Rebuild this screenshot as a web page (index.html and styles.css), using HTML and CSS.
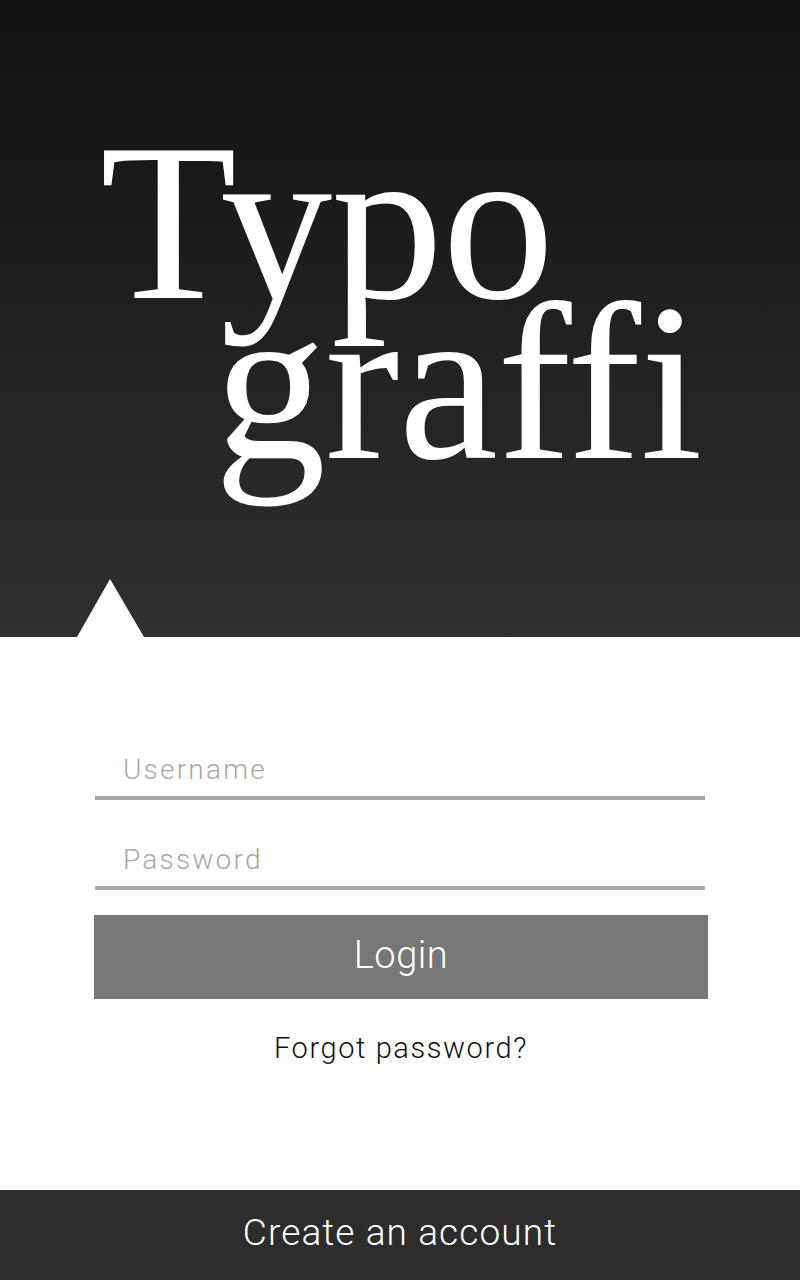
FILE: index.html
```html
<!DOCTYPE html>
<html lang="en">
<head>
<meta charset="utf-8">
<title>Typograffi — Login</title>
<link rel="stylesheet" href="styles.css">
</head>
<body>
<div class="app">
  <header class="hero">
    <h1 class="logo">
      <span class="logo-line first">Typo</span>
      <span class="logo-line second">graffi</span>
    </h1>
  </header>
  <main class="panel">
    <form class="login-form">
      <input class="field" type="text" placeholder="Username">
      <input class="field" type="password" placeholder="Password">
      <button class="btn-login" type="button">Login</button>
      <a class="forgot" href="#">Forgot password?</a>
    </form>
  </main>
  <footer class="footer">
    <a class="create" href="#">Create an account</a>
  </footer>
</div>
</body>
</html>
```
FILE: styles.css
```css
html, body {
  margin: 0;
  padding: 0;
}
body {
  font-family: Roboto, "Liberation Sans", Arial, sans-serif;
  background: #ffffff;
}
.app {
  width: 800px;
  height: 1280px;
  display: flex;
  flex-direction: column;
  overflow: hidden;
}
.hero {
  position: relative;
  height: 637px;
  flex: none;
  background: linear-gradient(to bottom, #111111 0%, #2f2f2f 100%);
  box-sizing: border-box;
  padding-top: 142px;
  padding-left: 100px;
}
.hero::after {
  content: "";
  position: absolute;
  left: 77px;
  bottom: 0;
  width: 0;
  height: 0;
  border-left: 33px solid transparent;
  border-right: 34px solid transparent;
  border-bottom: 58px solid #ffffff;
}
.logo {
  margin: 0;
  font-family: "Liberation Serif", "Times New Roman", serif;
  font-weight: normal;
  font-size: 224px;
  line-height: 160px;
  color: #ffffff;
  letter-spacing: -1px;
}
.logo-line {
  display: block;
}
.logo-line.second {
  padding-left: 114px;
}
.panel {
  flex: 1;
  display: flex;
  flex-direction: column;
  align-items: center;
  padding-left: 2px;
}
.login-form {
  width: 614px;
  display: flex;
  flex-direction: column;
  align-items: stretch;
  padding-top: 103px;
}
.field {
  display: block;
  margin: 0 3px 30px 1px;
  height: 60px;
  box-sizing: border-box;
  border: 0;
  border-bottom: 4px solid #a6a6a6;
  padding: 2px 0 0 28px;
  font-family: Roboto, "Liberation Sans", Arial, sans-serif;
  font-weight: 300;
  font-size: 28px;
  letter-spacing: 2.2px;
  color: #333333;
  background: transparent;
  outline: none;
}
.field::placeholder {
  color: #a8a8a8;
}
.field + .field {
  margin-bottom: 25px;
}
.btn-login {
  display: block;
  height: 84px;
  border: 0;
  background: #777777;
  color: #ffffff;
  font-family: Roboto, "Liberation Sans", Arial, sans-serif;
  font-weight: 300;
  font-size: 38px;
  letter-spacing: 0.5px;
  padding: 0 0 4px 0;
  cursor: pointer;
}
.forgot {
  align-self: center;
  margin-top: 32px;
  color: #111111;
  text-decoration: none;
  font-weight: 300;
  font-size: 29px;
  letter-spacing: 1.6px;
}
.footer {
  height: 90px;
  flex: none;
  background: #2d2d2d;
  display: flex;
  align-items: center;
  justify-content: center;
  box-sizing: border-box;
  padding-bottom: 6px;
}
.create {
  color: #ffffff;
  text-decoration: none;
  font-weight: 300;
  font-size: 37px;
  letter-spacing: 1.1px;
}
```
